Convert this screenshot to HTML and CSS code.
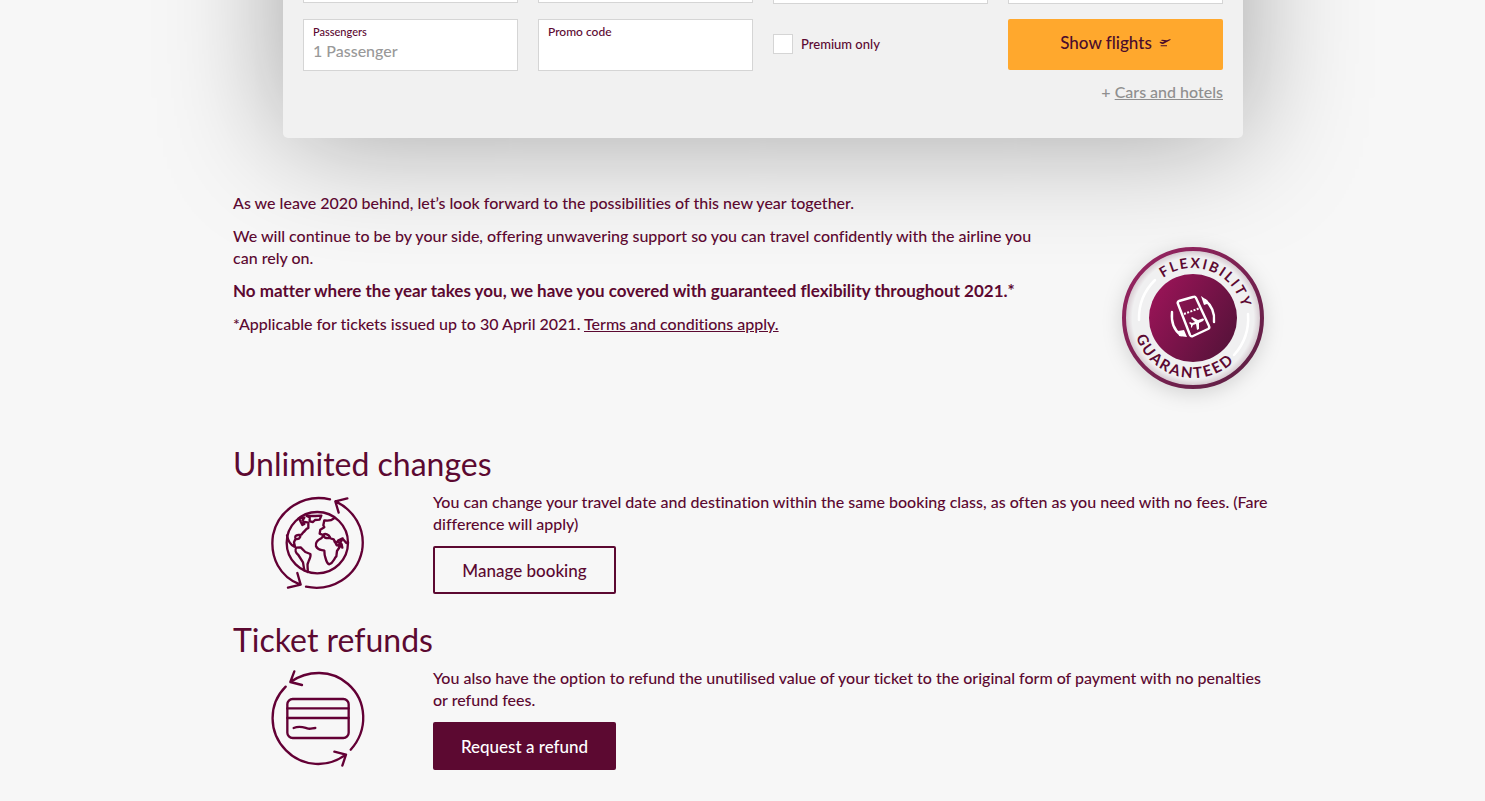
FILE: index.html
```html
<!DOCTYPE html>
<html lang="en">
<head>
  <meta charset="UTF-8">
  <meta name="viewport" content="width=device-width, initial-scale=1.0">
  <title>Guaranteed flexibility</title>
  <link rel="stylesheet" href="styles.css">
</head>
<body>
  <main class="page">

    <!-- Booking form -->
    <form class="booking">
      <div class="booking-grid">
        <input class="field" type="text" aria-label="From">
        <input class="field" type="text" aria-label="To">
        <input class="field tall" type="text" aria-label="Departure">
        <input class="field tall" type="text" aria-label="Return">

        <div class="field-box">
          <label class="small" for="passengers">Passengers</label>
          <input type="text" id="passengers" value="1 Passenger" readonly>
        </div>
        <div class="field-box">
          <label for="promo">Promo code</label>
          <input type="text" id="promo">
        </div>
        <div class="premium">
          <input type="checkbox" id="premium">
          <label for="premium">Premium only</label>
        </div>
        <button type="submit" class="show-flights">
          Show flights
          <svg class="plane" viewBox="0 0 36 30" aria-hidden="true">
            <path d="M1 12l3-1 7 2 6-2-12-4 4-2 15 2 8-3c3-1 5 1 1 3L14 17c-5 2-9 0-13-5zM5 22h19v3H5z"/>
          </svg>
        </button>
      </div>
      <p class="extras">+ <a href="#">Cars and hotels</a></p>
    </form>

    <!-- Intro -->
    <section class="intro">
      <div class="intro-text">
        <p>As we leave 2020 behind, let’s look forward to the possibilities of this new year together.</p>
        <p>We will continue to be by your side, offering unwavering support so you can travel confidently with the airline you can rely on.</p>
        <p><strong>No matter where the year takes you, we have you covered with guaranteed flexibility throughout 2021.*</strong></p>
        <p>*Applicable for tickets issued up to 30 April 2021. <a href="#">Terms and conditions apply.</a></p>
      </div>
      <svg class="badge" viewBox="-100 -100 200 200" role="img" aria-label="Flexibility guaranteed">
        <defs>
          <linearGradient id="ring" x1="0" y1="0" x2="1" y2="1">
            <stop offset="0" stop-color="#9c2463"/>
            <stop offset="1" stop-color="#5a1f42"/>
          </linearGradient>
          <linearGradient id="disc" x1="0" y1="0.2" x2="1" y2="0.8">
            <stop offset="0" stop-color="#9b1458"/>
            <stop offset="1" stop-color="#551239"/>
          </linearGradient>
          <radialGradient id="plate">
            <stop offset="0.88" stop-color="#f0f0f1"/>
            <stop offset="1" stop-color="#cfc0c8"/>
          </radialGradient>
          <path id="arc-top" d="M-50 0A50 50 0 0 1 50 0A50 50 0 0 1 -50 0"/>
          <path id="arc-bottom" d="M0 -60A60 60 0 0 0 0 60A60 60 0 0 0 0 -60"/>
        </defs>
        <circle class="badge-plate" r="69" fill="url(#plate)" stroke="url(#ring)" stroke-width="4"/>
        <circle r="44" fill="url(#disc)"/>
        <g fill="none" stroke="#fff" stroke-width="2.5" stroke-linecap="round">
          <path d="M-38 -38A54 54 0 0 0 -54 2"/>
          <path d="M55 -4A55 55 0 0 1 41 37"/>
        </g>
        <text class="badge-text"><textPath href="#arc-top" startOffset="97">FLEXIBILITY</textPath></text>
        <text class="badge-text badge-text-bottom"><textPath href="#arc-bottom" startOffset="174">GUARANTEED</textPath></text>
        <!-- ticket with two turning arrows -->
        <g fill="none" stroke="#fff" stroke-width="2.4" stroke-linejoin="round">
          <path d="M-15 -14Q-16 -16 -14 -17L0 -21Q2 -22 3 -20L16 8Q17 10 15 11L0 18Q-2 19 -3 17Z"/>
          <path stroke-width="2" stroke-dasharray="2 1.4" d="M-9 -4L7 -10"/>
          <path stroke-linecap="round" d="M-21 -6C-22 5 -18 13 -12 17M21 4C22 -5 18 -13 12 -18"/>
        </g>
        <g fill="#fff">
          <path d="M-15 13L-9 12L-6 19L-14 18ZM8 -22L15 -17L14 -14L11 -13Z"/>
          <path d="M11 1Q10 0 8 1L5 2L-1 -1L-2 0L2 4L-1 5L-3 4L-4 5L-2 7L-2 10L-1 9L0 7L3 6L4 12L6 11L6 5L10 3Q11 2 11 1Z"/>
        </g>
      </svg>
    </section>

    <!-- Services -->
    <section class="service">
      <h2>Unlimited changes</h2>
      <div class="service-row">
        <div class="service-icon">
          <svg viewBox="30 30 282 282" aria-hidden="true">
            <path d="M210 43C130 25 55 75 39 150C29 218 60 276 121 299M112 264L122 299L84 308"/>
            <path d="M138 305C215 321 290 275 306 198C318 130 280 75 227 49M262 40L226 49L236 83"/>
            <circle cx="172" cy="173" r="92"/>
            <path d="M115 101L133 98L128 106M119 104L127 120L133 117L130 110L145 113V129C138 130 136 138 130 142L124 149L117 150C107 149 103 155 107 163L117 161L121 155M106 163L102 172L105 185M81 151C84 167 92 180 103 185"/>
            <path d="M109 188L122 187L136 201L151 207C154 214 148 223 145 231C139 240 145 249 143 261M109 188C104 195 107 204 115 210L129 232L133 256"/>
            <path d="M140 93L149 97L149 109L159 111L165 105L179 104L184 92L166 93Z"/>
            <path d="M222 100C212 109 202 107 193 106L190 121L193 127L181 134L179 146L192 151L184 160C173 166 165 171 168 184C174 197 184 194 193 197L194 210C197 219 198 233 207 238C222 233 221 221 229 214L231 198L243 180L230 181L221 163L208 159C198 161 190 157 189 150C196 144 206 148 210 157"/>
            <path d="M224 170L241 174L248 160L234 167M236 182L245 178L247 188M248 161L259 174L264 171"/>
          </svg>
        </div>
        <div class="service-body">
          <p>You can change your travel date and destination within the same booking class, as often as you need with no fees. (Fare difference will apply)</p>
          <button type="button" class="btn">Manage booking</button>
        </div>
      </div>
    </section>

    <section class="service">
      <h2>Ticket refunds</h2>
      <div class="service-row">
        <div class="service-icon">
          <svg viewBox="30 33 282 282" aria-hidden="true">
            <path d="M272 269C325 210 322 123 264 72C215 28 143 30 91 66M103 34L91 66L126 75"/>
            <path d="M77 80C24 133 25 218 78 271C128 322 204 324 257 284M223 275L258 284L247 317"/>
            <rect x="82" y="117" width="184" height="117" rx="16"/>
            <path d="M82 145H266M82 174H266M101 204C121 196 132 203 145 206C154 207 158 204 166 204"/>
          </svg>
        </div>
        <div class="service-body">
          <p>You also have the option to refund the unutilised value of your ticket to the original form of payment with no penalties or refund fees.</p>
          <button type="button" class="btn btn-solid">Request a refund</button>
        </div>
      </div>
    </section>

  </main>
</body>
</html>
```
FILE: styles.css
```css
* {
  box-sizing: border-box;
}
body {
  margin: 0;
  padding-left: 41px;
  background: #f7f7f7;
  color: #5c0931;
  font-family: Lato, "Open Sans", sans-serif;
  font-size: 16px;
  font-weight: 500;
  font-variant-ligatures: none;
  line-height: 22px;
}
p, h2 {
  margin: 0;
}
a {
  color: inherit;
}
strong {
  font-size: 17px;
  font-weight: bold;
}
input, button {
  font: inherit;
}
.page {
  display: flow-root;
  max-width: 1060px;
  margin: 0 auto;
}

/* Booking form, its upper part runs above the page edge */
.booking {
  margin: -200px 50px 0;
  padding: 152px 20px 35px;
  background: #f1f1f1;
  border-radius: 5px;
  box-shadow: 0 0 120px rgba(0, 0, 0, 0.35);
}
.booking-grid {
  display: grid;
  grid-template-columns: repeat(4, 1fr);
  gap: 15px 20px;
  align-items: start;
}
.field {
  width: 100%;
  height: 51px;
  border: 1px solid #d5d5d5;
  background: white;
}
.field.tall {
  height: 52px;
}
.field-box {
  height: 52px;
  padding: 3px 9px;
  border: 1px solid #d5d5d5;
  background: white;
}
.field-box label {
  display: block;
  font-size: 12px;
  line-height: 17px;
}
.field-box .small {
  font-size: 11px;
}
.field-box input {
  display: block;
  width: 100%;
  height: 22px;
  padding: 0;
  border: none;
  outline: none;
  color: #999;
}
.premium {
  display: flex;
  align-items: center;
  gap: 8px;
  height: 50px;
  font-size: 13px;
}
.premium input {
  appearance: none;
  width: 20px;
  height: 20px;
  margin: 0;
  border: 1px solid #d5d5d5;
  background: white;
}
.show-flights {
  display: flex;
  align-items: center;
  justify-content: center;
  gap: 7px;
  height: 51px;
  padding: 0 0 4px;
  border: none;
  border-radius: 2px;
  background: #ffa82d;
  color: #4a0c2c;
  font-size: 17px;
  cursor: pointer;
}
.plane {
  width: 12px;
  height: 10px;
  fill: #4a0c2c;
}
.extras {
  margin-top: 10px;
  color: #8f8f8f;
  text-align: right;
}

/* Intro */
.intro {
  display: flex;
  margin-top: 54px;
}
.intro-text {
  flex: 1;
  padding-right: 40px;
}
.intro-text p {
  margin-bottom: 11px;
}
.badge {
  width: 200px;
  height: 200px;
  margin-top: 26px;
}
.badge-plate {
  filter: drop-shadow(0 4px 10px rgba(0, 0, 0, 0.15));
}
.badge-text {
  fill: #5c0931;
  font-size: 14px;
  font-weight: bold;
  letter-spacing: 2px;
  text-anchor: middle;
}
.badge-text-bottom {
  font-size: 15px;
}

/* Services */
.service {
  margin-top: 24px;
}
.service h2 {
  font-size: 32px;
  font-weight: normal;
  line-height: 44px;
}
.service-row {
  display: flex;
  padding-top: 5px;
}
.service-icon {
  flex: 0 0 200px;
  padding: 4px 0 0 37px;
}
.service-icon svg {
  display: block;
  width: 94px;
  height: 94px;
  overflow: visible;
  fill: none;
  stroke: #630035;
  stroke-width: 7;
  stroke-linecap: round;
  stroke-linejoin: round;
}
.service-body {
  flex: 1;
  padding-right: 15px;
}
.btn {
  min-width: 183px;
  height: 48px;
  margin-top: 11px;
  padding: 2px 24px 0;
  border: 2px solid #5c0931;
  border-radius: 2px;
  background: transparent;
  color: #5c0931;
  font-size: 17px;
  cursor: pointer;
}
.btn-solid {
  background: #5c0931;
  color: white;
}
```
